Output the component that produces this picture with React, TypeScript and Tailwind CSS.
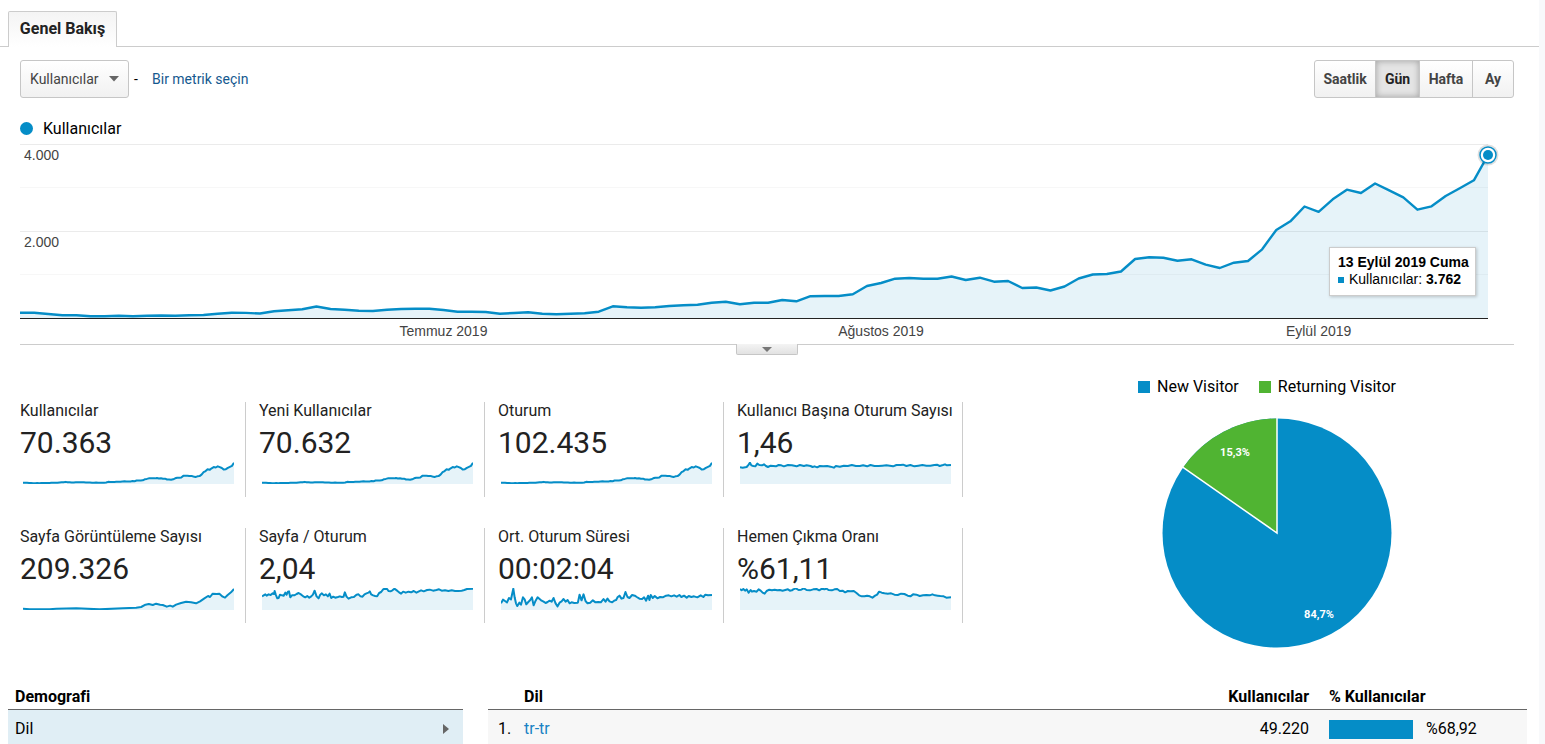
import React from 'react';

interface Metric {
  label: string;
  value: string;
  points: string;
}

// daily users, expressed as chart height (174 = 4.000)
const USERS = [
  5.3, 5.3, 4, 2.7, 2.7, 1.7, 1.7, 2.2, 1.7, 2.2, 2.5, 2.2, 2.7, 3, 4.3, 5.3, 5.1, 4.5, 6.7, 7.7, 8.8,
  11.5, 9, 8.3, 7.3, 7, 8.3, 9, 9.3, 9.3, 8, 6.3, 6.3, 6, 4.3, 5, 5.7, 4.3, 3.8, 4.3, 4.8, 6.3,
  11.7, 10.7, 10.3, 10.8, 12, 12.7, 13.2, 15.2, 16.3, 13.7, 15.3, 15.3, 18, 16.7, 21.8, 22, 22, 23.7, 32, 35, 39.3,
  40, 39.3, 39.3, 41.5, 38, 40.3, 36.3, 37, 30, 30.5, 27.5, 31.5, 39.5, 43.5, 44, 46.5, 59, 60.7, 60.2, 57.3,
  58.7, 53.3, 50, 55.3, 57, 68.7, 88, 96.7, 111.5, 106.2, 118.7, 128.3, 125, 134.5, 127.7, 120.7, 108.3, 111.7, 122, 129.7,
  137.7, 163,
];

const LAST = USERS.length - 1;

const mainPoints = USERS.map((v, i) => `${i * 10},${(174 - v).toFixed(1)}`).join(' ');

const usersSpark = USERS.map((v, i) => `${((i * 634) / LAST).toFixed(1)},${(64 - v * 0.38).toFixed(1)}`).join(' ');

const sessionsPerUser =
  '0,16 8,17 20,15 26,8 30,2 34,10 40,12 46,13 52,5 58,9 66,10 72,7 78,12 84,15 92,11 100,12 108,13 116,9 124,10 132,13 144,9 156,10 170,13 180,9 192,12 200,10 212,12 218,15 224,13 232,16 240,12 250,13 262,12 272,14 282,17 288,12 300,14 312,11 324,12 336,9 348,12 360,12 370,10 382,13 392,9 404,12 416,12 428,11 440,10 450,11 460,13 470,9 482,9 490,8 500,12 512,9 524,13 536,11 548,9 560,11 572,11 584,9 592,8 600,12 610,9 616,7 622,10 634,9';

const pageViews =
  '0,62 20,64 80,64 100,62 160,61 230,64 300,61 340,59 355,57 368,50 378,48 390,51 400,47 412,50 420,51 432,56 442,53 450,56 460,50 475,45 490,41 505,43 520,46 532,40 545,31 556,24 562,27 570,17 582,18 590,17 600,26 607,29 615,21 625,13 634,3';

const pagesPerSession =
  '0,25 5,22 10,19 14,23 20,19 26,21 32,16 36,18 38,9 41,19 46,31 50,30 54,20 60,22 65,23 70,14 74,20 78,11 81,10 85,28 90,22 97,22 104,18 110,15 118,20 124,25 130,28 136,24 142,29 148,25 153,20 158,8 164,25 170,31 175,20 180,16 186,22 192,19 198,25 203,17 208,30 214,26 220,29 228,27 234,25 240,27 245,26 249,13 254,26 260,32 268,28 276,27 284,20 290,19 296,25 302,26 308,19 314,16 320,14 324,10 328,19 334,22 340,24 346,25 352,15 358,12 364,4 368,2 376,3 380,9 386,10 392,7 398,2 406,8 412,13 418,17 424,11 432,14 440,11 448,13 456,9 464,14 470,11 478,7 486,10 496,6 504,5 514,8 524,6 532,4 540,8 550,7 560,9 570,7 580,9 590,9 600,8 608,6 616,3 634,2';

const avgDuration =
  '0,46 6,35 12,39 18,43 24,30 30,34 33,20 37,2 41,28 45,46 49,54 55,44 60,50 66,28 71,34 76,49 82,42 88,36 93,28 98,52 104,38 110,28 116,33 122,38 128,41 134,45 140,42 146,38 152,41 158,30 164,46 170,55 176,44 182,40 188,33 194,41 200,36 206,46 212,43 220,45 231,44 236,20 242,37 248,19 254,39 260,46 268,44 276,37 284,43 292,42 300,43 308,33 314,41 320,32 326,40 334,43 340,38 346,36 350,28 356,23 362,32 368,30 374,12 380,27 386,30 394,21 402,23 408,27 416,32 424,33 430,28 436,38 442,23 446,36 450,21 456,30 462,24 470,31 478,27 486,28 496,23 504,22 512,25 520,22 528,26 536,21 542,27 550,23 558,29 564,24 572,27 580,25 590,28 600,22 608,27 614,20 622,22 634,21';

const bounceRate =
  '0,3 5,7 10,3 16,8 20,4 26,14 32,6 36,11 42,9 50,11 56,4 62,8 68,14 74,17 80,9 88,5 96,7 104,5 112,7 120,6 128,8 136,6 144,4 150,8 156,7 160,4 168,1 176,6 184,5 192,1 200,6 210,7 220,4 230,3 238,7 246,2 254,4 260,2 266,6 276,7 284,4 292,3 300,9 308,8 316,13 324,9 332,10 342,9 350,15 358,22 366,25 374,25 382,23 390,25 398,29 406,23 412,20 418,11 426,14 434,16 444,17 454,16 464,20 474,21 484,17 494,18 504,23 512,25 520,19 530,20 540,24 550,22 560,21 570,22 578,19 586,22 594,23 602,24 612,25 620,29 634,28';

const METRICS: Metric[] = [
  { label: 'Kullanıcılar', value: '70.363', points: usersSpark },
  { label: 'Yeni Kullanıcılar', value: '70.632', points: usersSpark },
  { label: 'Oturum', value: '102.435', points: usersSpark },
  { label: 'Kullanıcı Başına Oturum Sayısı', value: '1,46', points: sessionsPerUser },
  { label: 'Sayfa Görüntüleme Sayısı', value: '209.326', points: pageViews },
  { label: 'Sayfa / Oturum', value: '2,04', points: pagesPerSession },
  { label: 'Ort. Oturum Süresi', value: '00:02:04', points: avgDuration },
  { label: 'Hemen Çıkma Oranı', value: '%61,11', points: bounceRate },
];

const MONTHS = [
  { label: 'Temmuz 2019', day: 30 },
  { label: 'Ağustos 2019', day: 61 },
  { label: 'Eylül 2019', day: 92 },
];

const RANGES = [
  { label: 'Saatlik', width: 'w-[62px]' },
  { label: 'Gün', width: 'w-[45px]' },
  { label: 'Hafta', width: 'w-[54px]' },
  { label: 'Ay', width: 'w-[42px]' },
];

const Toolbar: React.FC = () => {
  const [range, setRange] = React.useState('Gün');

  return (
    <div className="flex items-center justify-between">
      <div className="flex items-center text-sm">
        <div className="relative">
          <select
            aria-label="Metrik"
            className="h-[38px] w-[109px] appearance-none rounded-[3px] border border-[#c6c6c6] bg-linear-to-b from-white to-[#f1f1f1] pl-[9px] text-sm text-[#444]"
          >
            <option>Kullanıcılar</option>
          </select>
          <svg className="pointer-events-none absolute top-4 right-[10px] h-[6px] w-[10px]" viewBox="0 0 10 6">
            <path d="M0 0h10L5 5.5z" fill="#666" />
          </svg>
        </div>
        <span className="ml-[5px] w-[18px] text-black">-</span>
        <a href="#metric" className="text-[#15598f]">Bir metrik seçin</a>
      </div>
      <div className="flex">
        {RANGES.map((r) => (
          <button
            key={r.label}
            onClick={() => setRange(r.label)}
            className={`-ml-px h-[38px] border border-[#c6c6c6] text-sm font-bold first:ml-0 first:rounded-l-[3px] last:rounded-r-[3px] ${r.width} ${
              range === r.label
                ? 'z-10 bg-[#e4e4e4] text-[#222] shadow-[inset_0_0_6px_rgba(0,0,0,0.3)]'
                : 'bg-linear-to-b from-white to-[#f1f1f1] text-[#444]'
            }`}
          >
            {r.label}
          </button>
        ))}
      </div>
    </div>
  );
};

const UsersChart: React.FC = () => (
  <section className="mt-5">
    <div className="flex h-[21px] items-center gap-[10px] text-base text-black">
      <span className="h-[13px] w-[13px] rounded-full bg-[#058dc7]" />
      Kullanıcılar
    </div>
    <div className="relative mt-[5px] mr-[26px] h-[175px] font-['Liberation_Sans',sans-serif]">
      <svg className="h-full w-full" viewBox="0 0 1040 175" preserveAspectRatio="none">
        <rect x="0" y="0" width="1040" height="1" fill="#ebebeb" />
        <rect x="0" y="43" width="1040" height="1" fill="#f7f7f7" />
        <rect x="0" y="87" width="1040" height="1" fill="#ebebeb" />
        <rect x="0" y="130" width="1040" height="1" fill="#f7f7f7" />
        <polygon points={`0,174 ${mainPoints} 1040,174`} fill="#058dc7" fillOpacity="0.1" />
        <rect x="0" y="174" width="1040" height="1" fill="#222" />
        <polyline
          points={mainPoints}
          fill="none"
          stroke="#058dc7"
          strokeWidth="2.4"
          strokeLinejoin="round"
          vectorEffect="non-scaling-stroke"
        />
      </svg>
      <span className="absolute top-[2px] left-1 text-sm leading-[18px] text-[#444]">4.000</span>
      <span className="absolute top-[89px] left-1 text-sm leading-[18px] text-[#444]">2.000</span>
      <svg className="absolute -top-px -right-3 h-6 w-6" viewBox="0 0 24 24">
        <circle cx="12" cy="12" r="10.5" fill="#000" fillOpacity="0.12" />
        <circle cx="12" cy="12" r="8" fill="#fff" stroke="#058dc7" strokeWidth="1.5" />
        <circle cx="12" cy="12" r="5" fill="#058dc7" />
      </svg>
      <div className="absolute top-[103px] right-3 h-[49px] w-[147px] border border-[#ccc] bg-white pt-[6px] pl-2 text-sm leading-[17px] whitespace-nowrap text-black shadow-[1px_1px_3px_rgba(0,0,0,0.2)]">
        <div className="font-bold">13 Eylül 2019 Cuma</div>
        <div className="flex items-center">
          <span className="mr-[5px] h-[6px] w-[6px] bg-[#058dc7]" />
          Kullanıcılar:&nbsp;<b>3.762</b>
        </div>
      </div>
    </div>
    <div className="relative mr-[26px] h-[25px] font-['Liberation_Sans',sans-serif] text-sm leading-6 text-[#444]">
      {MONTHS.map((m) => (
        <span
          key={m.label}
          className="absolute top-0 -translate-x-1/2 whitespace-nowrap"
          style={{ left: `${(m.day / LAST) * 100}%` }}
        >
          {m.label}
        </span>
      ))}
    </div>
    <div className="flex h-[11px] justify-center border-t border-[#ccc]">
      <button
        aria-label="Grafiği daralt"
        className="-mt-px flex h-[11px] w-[62px] items-center justify-center rounded-b-[2px] border border-t-0 border-[#c6c6c6] bg-linear-to-b from-[#f4f4f4] to-[#e2e2e2]"
      >
        <svg className="h-[5px] w-[10px]" viewBox="0 0 10 5">
          <path d="M0 0h10L5 5z" fill="#777" />
        </svg>
      </button>
    </div>
  </section>
);

const MetricCard: React.FC<{ metric: Metric }> = ({ metric }) => (
  <div className="h-[95px] border-r border-[#ccc] whitespace-nowrap text-[#222]">
    <div className="text-base leading-[18px]">{metric.label}</div>
    <div className="mt-1 text-3xl leading-[38px]">{metric.value}</div>
    <div className="pr-[11px] pl-[3px]">
      <svg className="h-[22px] w-full" viewBox="0 0 634 66" preserveAspectRatio="none">
        <polygon points={`0,66 ${metric.points} 634,66`} fill="#058dc7" fillOpacity="0.1" />
        <polyline
          points={metric.points}
          fill="none"
          stroke="#058dc7"
          strokeWidth="2"
          strokeLinejoin="round"
          vectorEffect="non-scaling-stroke"
        />
      </svg>
    </div>
  </div>
);

const VisitorPie: React.FC = () => (
  <div className="flex flex-col items-center pt-[2px] pl-[57px]">
    <div className="flex h-5 items-center gap-5 text-base whitespace-nowrap text-black">
      <span className="flex items-center gap-[7px]">
        <span className="h-3 w-3 bg-[#058dc7]" />
        New Visitor
      </span>
      <span className="flex items-center gap-[7px]">
        <span className="h-3 w-3 bg-[#50b432]" />
        Returning Visitor
      </span>
    </div>
    <svg className="mt-[21px] ml-[19px] h-[230px] w-[230px]" viewBox="-115 -115 230 230">
      <circle r="114.5" fill="#058dc7" />
      <path d="M0 0V-114.5A114.5 114.5 0 0 0 -93.9 -65.5Z" fill="#50b432" />
      <path d="M0 -115V0L-94.3 -65.8" fill="none" stroke="#fff" strokeWidth="1.5" />
      <g fill="#fff" fontSize="11" fontWeight="700" textAnchor="middle">
        <text x="-42" y="-77">15,3%</text>
        <text x="42" y="85">84,7%</text>
      </g>
    </svg>
  </div>
);

const Tables: React.FC = () => (
  <div className="mt-[35px] mr-3 ml-2 grid grid-cols-[455fr_1039fr] items-start gap-[25px] text-base text-black [font-variant-ligatures:none]">
    <table className="w-full">
      <thead>
        <tr className="h-[26px] border-b border-[#666]">
          <th className="pt-[2px] pl-[7px] text-left font-bold">Demografi</th>
        </tr>
      </thead>
      <tbody>
        <tr className="h-[35px] bg-[#e0eef5]">
          <td className="px-[7px]">
            <a href="#dil" className="flex items-center justify-between pt-1">
              Dil
              <svg className="mr-[7px] h-[10px] w-[6px]" viewBox="0 0 6 10">
                <path d="M0 0l6 5-6 5z" fill="#666" />
              </svg>
            </a>
          </td>
        </tr>
      </tbody>
    </table>
    <table className="w-full">
      <thead>
        <tr className="h-[26px] border-b border-[#666]">
          <th className="w-9" aria-label="Sıra" />
          <th className="pt-[2px] text-left font-bold">Dil</th>
          <th className="pt-[2px] text-right font-bold">Kullanıcılar</th>
          <th className="w-[218px] pt-[2px] pl-5 text-left font-bold">% Kullanıcılar</th>
        </tr>
      </thead>
      <tbody>
        <tr className="h-[35px] bg-[#f7f7f7]">
          <td className="pt-1 pl-[10px]">1.</td>
          <td className="pt-1">
            <a href="#tr-tr" className="text-[#1a82c4]">tr-tr</a>
          </td>
          <td className="pt-1 text-right">49.220</td>
          <td className="pt-1 pl-5">
            <div className="flex items-center gap-[13px]">
              <span className="h-[19px] w-[84px] bg-[#058dc7]" />
              %68,92
            </div>
          </td>
        </tr>
      </tbody>
    </table>
  </div>
);

export default function App() {
  return (
    <div className="flex min-h-screen bg-white font-[Roboto,sans-serif]">
      <main className="min-w-0 flex-1">
        <nav className="flex border-b border-[#ccc] pt-[11px] pl-2">
          <button className="-mb-px h-9 w-[109px] rounded-t-[2px] border border-b-0 border-[#ccc] bg-linear-to-b from-[#f4f4f4] to-white pb-px text-base font-bold text-[#222]">
            Genel Bakış
          </button>
        </nav>
        <div className="pt-[13px] pr-[25px] pl-5">
          <Toolbar />
          <UsersChart />
          <div className="mt-5 grid grid-cols-[943fr_551fr]">
            <div className="grid grid-cols-4 content-start gap-x-[13px] gap-y-[31px] pt-[27px]">
              {METRICS.map((m) => (
                <MetricCard key={m.label} metric={m} />
              ))}
            </div>
            <VisitorPie />
          </div>
        </div>
        <Tables />
      </main>
      <div className="w-[6px] bg-[#f8f9fb]" />
    </div>
  );
}
